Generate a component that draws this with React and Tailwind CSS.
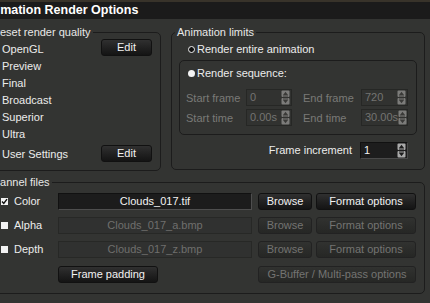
import React from 'react';

const FONT = { fontFamily: '"Liberation Sans", Arial, sans-serif' };

function Group({ legend, legendLeft, className, children }) {
    return (
        <div className={`relative rounded-[5px] border border-[#1c1c1c] ${className}`}>
            <span
                className="absolute top-[-7px] px-[2px] bg-[#333432] leading-[13px] text-[#e8e8e8] whitespace-nowrap"
                style={{ left: legendLeft }}
            >
                {legend}
            </span>
            {children}
        </div>
    );
}

function Button({ children, disabled, className = '' }) {
    return (
        <div
            className={`h-[17px] flex items-center justify-center rounded-[3px] border leading-[15px] whitespace-nowrap ${
                disabled
                    ? 'border-[#222] bg-linear-to-b from-[#313230] to-[#262725] text-[#747472]'
                    : 'border-[#111] bg-linear-to-b from-[#303030] to-[#141414] text-[#f2f2f2]'
            } ${className}`}
        >
            {children}
        </div>
    );
}

function Spinner({ bright }) {
    const box = bright ? '#a9a9a9' : '#7c7c7a';
    const tri = bright ? '#1c1c1c' : '#3a3a38';
    return (
        <svg width="9" height="15" viewBox="0 0 9 15" className="shrink-0">
            <rect x="0.5" y="0.5" width="8" height="6.5" rx="1" fill={box} />
            <rect x="0.5" y="8" width="8" height="6.5" rx="1" fill={box} />
            <path d="M4.5 1.8 L7 5 L2 5 Z" fill={tri} />
            <rect x="2" y="5.5" width="5" height="1" fill={tri} />
            <path d="M4.5 13.2 L7 10 L2 10 Z" fill={tri} />
            <rect x="2" y="8.5" width="5" height="1" fill={tri} />
        </svg>
    );
}

function NumField({ value, width, bright }) {
    return (
        <div
            className={`h-[17px] flex items-center justify-between pl-[3px] pr-[1px] border ${
                bright
                    ? 'bg-[#1d1d1d] border-[#111] border-b-[#4a4a4a] border-r-[#4a4a4a] text-[#f2f2f2]'
                    : 'bg-[#313230] border-[#262725] text-[#747472]'
            }`}
            style={{ width }}
        >
            <span className="leading-[15px]">{value}</span>
            <Spinner bright={bright} />
        </div>
    );
}

function Check({ checked }) {
    return (
        <div className="w-[7px] h-[7px] bg-[#f2f2f2] shrink-0 flex items-center justify-center">
            {checked && (
                <svg width="7" height="7" viewBox="0 0 7 7">
                    <path d="M1 3.5 L2.8 5.5 L6 1.2" stroke="#111" strokeWidth="1.4" fill="none" />
                </svg>
            )}
        </div>
    );
}

function ChannelRow({ label, file, checked, className = '' }) {
    return (
        <div className={`flex items-center h-[17px] ${className}`}>
            <div className="w-[58px] flex items-center gap-[6px] pl-[1px]">
                <Check checked={checked} />
                <span className="leading-[17px] text-[#ececec]">{label}</span>
            </div>
            <div
                className={`w-[194px] h-[17px] flex items-center justify-center border ${
                    checked
                        ? 'bg-[#1c1c1c] border-[#111] border-b-[#4e4e4e] border-r-[#4e4e4e] text-[#f2f2f2]'
                        : 'bg-[#303130] border-[#272826] text-[#6f6f6d]'
                }`}
            >
                {file}
            </div>
            <Button disabled={!checked} className="ml-[6px] w-[54px]">Browse</Button>
            <Button disabled={!checked} className="ml-[4px] w-[100px]">Format options</Button>
        </div>
    );
}

export default function App() {
    const qualities = ['Preview', 'Final', 'Broadcast', 'Superior', 'Ultra'];

    return (
        <div className="w-[430px] h-[303px] overflow-hidden bg-[#333432] text-[11px] text-[#ececec]" style={FONT}>
            <div className="h-[2px] bg-[#38332a]" />
            <div className="h-[17px] bg-[#1b1b1b] leading-[17px] font-bold text-[12.5px] text-white whitespace-nowrap">
                <span className="ml-[-20px]">Animation Render Options</span>
            </div>

            <div className="flex items-start mt-[13px]">
                {/* preset render quality */}
                <Group legend="Preset render quality" legendLeft={-9} className="ml-[-5px] w-[166px] h-[139px]">
                    <div className="flex flex-col pt-[8px] pl-[6px] pr-[8px]">
                        <div className="flex justify-between items-start h-[17px]">
                            <span className="leading-[17px]">OpenGL</span>
                            <Button className="w-[51px] -mt-[2px]">Edit</Button>
                        </div>
                        {qualities.map((q) => (
                            <div key={q} className="h-[17px] leading-[17px]">{q}</div>
                        ))}
                        <div className="flex justify-between items-start h-[17px] mt-[3px]">
                            <span className="leading-[17px]">User Settings</span>
                            <Button className="w-[51px] -mt-[1px]">Edit</Button>
                        </div>
                    </div>
                </Group>

                {/* animation limits */}
                <Group legend="Animation limits" legendLeft={3} className="ml-[10px] w-[254px] h-[138px]">
                    <div className="flex flex-col pt-[8px]">
                        <div className="flex items-center h-[17px] pl-[16px] gap-[2px]">
                            <div className="w-[7px] h-[7px] rounded-full bg-[#111] border border-[#f0f0f0]" />
                            <span className="leading-[17px]">Render entire animation</span>
                        </div>

                        <div className="ml-[7px] mt-[2px] w-[238px] h-[75px] rounded-[5px] border border-[#1c1c1c]">
                            <div className="flex items-center h-[17px] mt-[4px] pl-[8px] gap-[2px]">
                                <div className="w-[7px] h-[7px] rounded-full bg-[#f4f4f4]" />
                                <span className="leading-[17px]">Render sequence:</span>
                            </div>
                            <div className="flex items-center mt-[7px] pl-[6px] text-[#7a7a77]">
                                <span className="w-[60px] leading-[17px] translate-y-[1px]">Start frame</span>
                                <NumField value="0" width={46} />
                                <span className="ml-[11px] w-[58px] leading-[17px] translate-y-[1px]">End frame</span>
                                <NumField value="720" width={47} />
                            </div>
                            <div className="flex items-center mt-[3px] pl-[6px] text-[#7a7a77]">
                                <span className="w-[60px] leading-[17px] translate-y-[1px]">Start time</span>
                                <NumField value="0.00s" width={46} />
                                <span className="ml-[11px] w-[58px] leading-[17px] translate-y-[1px]">End time</span>
                                <NumField value="30.00s" width={47} />
                            </div>
                        </div>

                        <div className="flex items-center justify-end mt-[7px] pr-[16px] gap-[8px]">
                            <span className="leading-[17px]">Frame increment</span>
                            <NumField value="1" width={48} bright />
                        </div>
                    </div>
                </Group>
            </div>

            {/* channel files */}
            <Group legend="Channel files" legendLeft={-12} className="ml-[-5px] mt-[11px] w-[430px] h-[112px]">
                <div className="flex flex-col pt-[10px] pl-[4px]">
                    <ChannelRow label="Color" file="Clouds_017.tif" checked />
                    <ChannelRow label="Alpha" file="Clouds_017_a.bmp" className="mt-[7px]" />
                    <ChannelRow label="Depth" file="Clouds_017_z.bmp" className="mt-[7px]" />
                    <div className="flex items-center mt-[8px]">
                        <Button className="ml-[58px] w-[100px]">Frame padding</Button>
                        <Button disabled className="ml-[100px] w-[158px]">G-Buffer / Multi-pass options</Button>
                    </div>
                </div>
            </Group>
        </div>
    );
}
